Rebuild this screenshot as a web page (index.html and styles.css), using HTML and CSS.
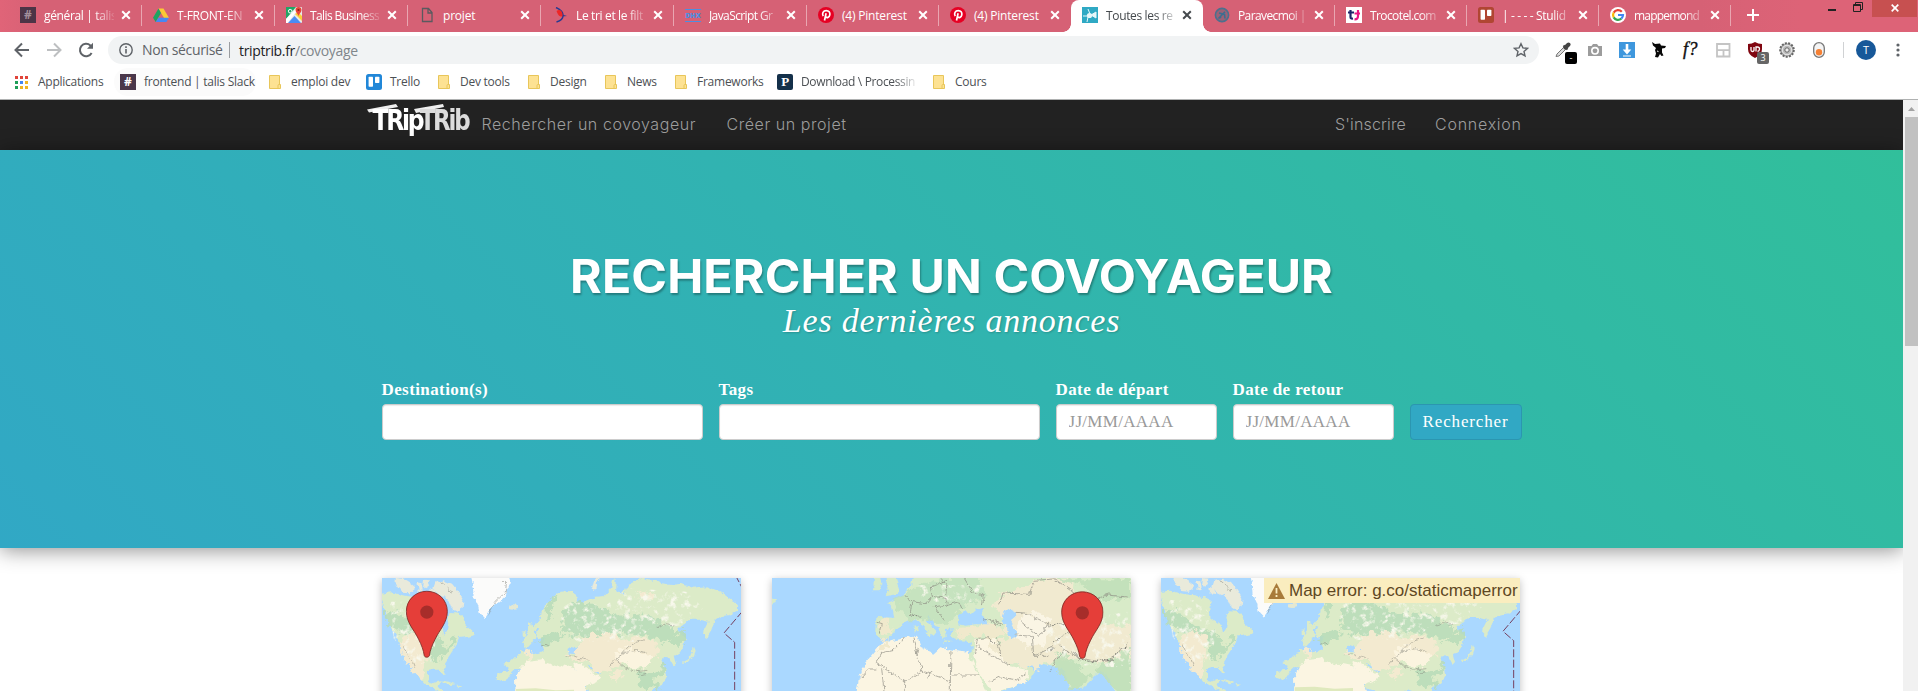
FILE: index.html
```html
<!DOCTYPE html>
<html lang="fr">
<head>
<meta charset="utf-8">
<title>Toutes les recherches</title>
<link rel="stylesheet" href="styles.css">
</head>
<body>
<svg class="defs" width="0" height="0">
  <defs>
    <symbol id="x" viewBox="0 0 10 10"><path d="M1.2 1.2l7.6 7.6M8.800 1.200l-7.600 7.600" stroke="currentColor" stroke-width="2" fill="none"/></symbol>
    <symbol id="folder" viewBox="0 0 16 16"><path d="M2.500 1.500h10v13h-10z" fill="#fde293" stroke="#e8c65a"/><path d="M11 14.500v-3q0-1 1-1h1.500v4z" fill="#fde293" stroke="#e8c65a"/></symbol>
    <symbol id="pin-logo" viewBox="0 0 16 16"><circle cx="8" cy="8" r="8" fill="#e60023"/><path d="M5.200 9.200C3.600 6.300 5.300 3.600 8.200 3.600c2.700 0 4 1.900 3.600 4.200-.4 2.600-3.100 3.600-4.200 1.700M8.100 6.300L6.500 13.500" stroke="#fff" stroke-width="1.700" fill="none"/></symbol>
    <symbol id="trello" viewBox="0 0 16 16"><rect width="16" height="16" rx="2.500" fill="currentColor"/><rect x="2.600" y="2.800" width="4.400" height="10" rx=".7" fill="#fff"/><rect x="9" y="2.800" width="4.400" height="6.200" rx=".7" fill="#fff"/></symbol>
    <filter id="coast" x="0" y="0" width="100%" height="100%"><feTurbulence type="fractalNoise" baseFrequency=".06" numOctaves="4" seed="4" result="n"/><feDisplacementMap in="SourceGraphic" in2="n" scale="16" xChannelSelector="R" yChannelSelector="G"/></filter>
    <filter id="rough" x="0" y="0" width="100%" height="100%"><feTurbulence type="fractalNoise" baseFrequency=".05" numOctaves="4" seed="9" result="n"/><feDisplacementMap in="SourceGraphic" in2="n" scale="42" xChannelSelector="R" yChannelSelector="G"/></filter>
    <filter id="speckle" x="0" y="0" width="100%" height="100%"><feTurbulence type="fractalNoise" baseFrequency=".05" numOctaves="5" seed="12"/><feColorMatrix values="0 0 0 0 .94  0 0 0 0 .94  0 0 0 0 .84  0 4 0 0 -2.100"/><feComposite in2="SourceGraphic" operator="in"/></filter>
    <symbol id="marker" viewBox="0 0 128 204"><path d="M64 2C29 2 2 29 2 63c0 34 24 56 37 84 9 18 15 33 17 49 1 7 15 7 16 0 2-16 8-31 17-49 13-28 37-50 37-84C126 29 99 2 64 2z" fill="#e53e39" stroke="#7c2a27" stroke-width="2.500"/><circle cx="64" cy="65" r="20" fill="#a72d2a"/></symbol>
    <g id="world">
      <rect x="0" y="90" width="1160" height="420" fill="#aad8ff"/>
      <g filter="url(#coast)">
        <g fill="#e9eadb">
          <path d="M78 129l22 2 22 14 16 14-18 16-26-2-12-14-6-10zM142 142l12 2 4 22-12 4zM162 134l14 2 4 16-12 8-8-8zM178 160l16 4 8 18-22-2zM196 142l24-6 26 10 16 20 18 30-2 22-18 12-14-8-8-20-14-14-20-10-14-18z"/>
          <path d="M665 162l8-30 10-8 6 4-10 20-4 16z"/>
        </g>
        <path d="M302 120l10 40 2 28 10 22 6 26 12 14 12-18 10-18 22-12 24-22-4-14 14-16-2-14 10-16z" fill="#fbfbfa"/>
        <ellipse cx="432" cy="216" rx="15" ry="8" fill="#e4e8d2"/>
        <g fill="#dcebc8">
          <path d="M30 176l34-4 40 10 32 4 30 6 22 12-6 20-2 22 20 18 18 12 4 26 10-8 4-24-4-18 10-18 24 2 14 12 6 20 20 18 8 14-26 6-22 4-10 24-14 22-20 30-2 14 8 18-8 2-12-16-18 0-16 4 0 24 12 14 16-8 12-2-8 18 4 6 20 10 4 16-14-6-22-14-26-14-20-20-8-24-22-26-16-18-10-30-14-24-24-40z"/>
          <path d="M216 436l20 4 20 8-14 2-24-10zM262 452l14 2-6 6z"/>
          <path d="M474 262l10 4 4 20 10 16-4 10-20 2 6-16-6-10zM458 290l12-2-2 16-10 2z"/>
          <path d="M512 250l4-26 26-30 30-24 26-2 28 16-8 14 12 6 36-14 32-4 26-28 6-28 10 10-2 32 22 4 12-26 46-22 34 10 20 6 32 6 30-4 34 12 40-4 44 16 24 18 28 20 0 18-26 14-24 4-20 12-10 32-14 22-8-4 2-22 12-24-26-6-28 0-26 12-14 20 10 8 16 14-4 26-18 22-14 8 6 22-8 8-12-22-16-4-6 16 12 22 4 22-14 22-18 8-14 4 0 14 12 20-6 12-18-18-8 14-14-6-16-22-20-8-26 18-18 18-4 24-14-20-10-28-12-6-34-6-10-4-18-8 24 30 10 6-2 14-50 24-12 4-20-34-14-34 2-16-22-4-22 4-8-8 8-12-20-8-8 8-12-4-10-18-6-6 14 24-2 8-8-12-18-20-18 0-14 14-10 16-18 8-14-4 2-24 30-2 4-12-16-12 20-6 18-18 16-4-2-14 10 4 8 12 42-8 10-6-6-22 14-14-24 6-6-18 8-20-16 10-4 30-16 18-10 2-6-18z"/>
          <path d="M968 336l6 14-6 16-12 12-18 6-2-4 22-12 8-18z"/>
        </g>
        <g fill="#aad8ff">
          <path d="M590 346l14-10 12 4 10-4 16 10 6 12-20 0-22-2-12 2zM654 334l10 4 0 14 6 18-8 6-6-16-4-14zM612 400l8 2 16 26 12 30-6 2-16-26zM658 388l14 12 22 14-6 4-20-10-14-16z"/>
        </g>
        <g fill="#fbf5e2">
          <path d="M437 480l-2-46 12-28 24-28 50-6 8 14 32 10 14-8 36 8 8 14 24 42 14 38z"/>
          <path d="M610 388l12-6 30 16 14 16 24 12-8 16-26 10-14 4-22-36z"/>
        </g>
      </g>
      <g filter="url(#rough)">
        <g fill="#b8dcb9" opacity=".85">
          <path d="M40 240l36-14 34 30 60 38 30 4 24 24-6 14 18-8 14-16 14-2-10 20-28 16-12 26-16 12-20-8 8-38-34-38-50-4-34-14z"/>
          <path d="M580 226l40-24 40 6 40 10 32 20 40 6 40-6 60 20 40 30 0 20-40 8-60-14-60-8-60 14-70 0-46-20z"/>
          <path d="M880 330l36-30 28-20 4 30-20 20-20-4zM800 420l24-14 40 6 20-30 8 14-12 30-28 8 14 26-6 8-16-14-18 14z"/>
          <path d="M500 320l24-18 40-12 20 6-16 18-20 10-30 8zM540 190l30-12-20 36-8 40-16-8z"/>
        </g>
        <g fill="#f3ead0">
          <path d="M92 318l30-26 44 12 6 50-10 56-4 20-24-20-22-30-18-26z"/>
          <path d="M622 322l40-20 66-10 50 24 26-12 60 18-4 36-26 28-46 12-30-18-22 12-26 18-40-6-10-18-40-24z"/>
          <path d="M466 352l26-4-4 18-18 8zM590 360l44-2 24 14-18 8-46-10zM720 420l20-14 20 4-4 18-16 12zM800 180l30-14 20 16-20 16z"/>
        </g>
        <path d="M736 352l34-14 42 10 36 14-6 26-34 16-38-12-28-18z" fill="#fbf4df"/>
      </g>
      <g filter="url(#speckle)"><path d="M60 200h100l40 90-10 90-50 10-70-80zM560 240l30-40 120 10 60-50 180 10 50 50-60 50-100 10-40 40-180 0z"/></g>
      <g filter="url(#coast)" fill="none" stroke="#7f8077" stroke-width="1.400">
        <path d="M722 392l18-22 24-18 40-6 30 10M738 376l26 22 34 12 34-4M750 362l22-24 26-16 26-8M100 334l10 24 16 20 8 20M395 134l14 14-4 26-22 20-16 18-14 30M584 364l26-2 20 8 22 6M510 334l18-6 14 8M860 276l24-8 30 6M800 404l14 18 14-4M212 140l14 12 10 14 16 6"/>
      </g>
      <path d="M437 462l60-2 60 6 55-2v20H437z" fill="#dfe9bd"/>
      <path d="M1096 120l20 38M1118 228l-56 66 32 28v170" fill="none" stroke="#75405f" stroke-width="3" stroke-dasharray="24 7"/>
    </g>
    <g id="eurasia">
      <rect x="0" y="90" width="1160" height="420" fill="#aad8ff"/>
      <g filter="url(#coast)">
        <g fill="#d8ebc8">
          <path d="M30 186l14 6 0 12-14 6zM340 122l20 0 4 26-8 18-20 0zM378 120l22 0 14 40-2 16-38 8 10-18-8-20zM456 120l-6 32-12 14-20 20-36 16 12 14 6 32-54-2-4 54 18 12 22-2 18-20 18-22 24-12 30 0 18 24 28 22 8-10-16-20-16-14 12-14 26 34 10 32 12-4-2-24 26-2-8 24 20 12 42 2 0 32-14 22 16 36 42 68 30 0 96-38 20-28-16-14-32-10-28-28 8-6 42 24 92 20 20 8 20 54h38l30-28 24-24 18 14 24 54h90V110z"/>
          <path d="M460 272l10-2 4 18-10 2zM490 294l22-4-2 14zM550 316l26 2-4 4-22-2zM616 316l18-6-4 10-12 2z"/>
        </g>
        <g fill="#fbf5e2">
          <path d="M286 480l8-50 18-46 50-60 106-22 12 34 40 20 18-16 84 10 22 50 38 80z"/>
          <path d="M644 312l56-6 24 54 20 32 58 14-4 34-100 36-46-66-16-48z"/>
        </g>
      </g>
      <g filter="url(#rough)">
        <path d="M700 210l26-34 40-12 60-32 100-6 20 60-40 60 20 40 70-20 120 10v90l-80 20-100-20-50 14-60 20-80-10-60-60 60-20z" fill="#f1ead0"/>
        <path d="M350 256l40 2 6 30-20 12-26-4zM588 276l60-6 50-8 34 24 6 14-50 10-98-6zM350 330l30-14 8 12-40 30z" fill="#f0e9cc"/>
        <path d="M780 240l60-8 30 40-20 60-60 0-30-40z" fill="#faf5e4"/>
        <path d="M400 200l60-40 80-30 110-4 30 60-70 30-60 60-50-20-60 0z" fill="#bfe0bb" opacity=".7"/>
        <path d="M870 130h240v60l-90 10-60-50zM1010 400l100-60v130h-50zM870 370l40-20 50 50 30 30-60 40-30-50z" fill="#bfdfb9" opacity=".85"/>
      </g>
      <g filter="url(#coast)" fill="#aad8ff"><path d="M592 268l4-30 20-10 16 10 14-14 20-6-8 20 20 14 4 16-40 0-28 4zM722 256l14-36 28 12 4 10-18 16 8 14 10 30-18 10-10-16-2-22z"/></g>
      <g filter="url(#speckle)"><path d="M470 150h210l-20 50h-180zM860 270l240-40 10 170-160-10-100-40z"/></g>
      <g filter="url(#coast)" fill="none" stroke="#8b8a80" stroke-width="2">
        <path d="M346 382l86 58-4 40M346 382l16-28 34-8 34-36M456 308l12 50 16 50-52 32M484 408l84 30 2-92M572 420h86M568 438v42M500 430l10-20M362 400l8 80M346 402l-24 0-28 30M472 334l-6 28M640 360l10-50 36-2 20 20M650 332l40 28 60 34M686 440l30-14 58 10 16-20M716 208l10-34 80 4 14-42 60-4 66 44 0 20M764 232l30 2 54 26 20 14M780 260l54 44 30-40M764 300l50 4 4 60 60-30M706 310l16 50M818 364l40 0 20-26M870 408l10-26 30-40M430 180l22 20 44 6 18-22-6-28 50-20M452 200l-4 40M514 184l40 6 6 20-42 6M520 216l30 40M560 210l34-10 10 24M610 130l24 40 36 12-6 30M540 130l20 24-4 36M980 200l60-20 60 6M350 262l14 4-6 30M670 250l56 18M930 350l30 20 50 10 50-4"/>
        <path stroke="#85857c" stroke-width="3" stroke-dasharray="5 2" d="M866 270l40-4 20 20-30 24-20 14M894 330l40 30 50 20 60-4 56-50M450 240l34 4M690 260l30 16"/>
      </g>
    </g>
  </defs>
</svg>

<header class="browser">
  <div class="tabs">
    <div class="tab"><span class="ico slack dim">#</span><span class="title">général | talis</span><svg class="close"><use href="#x"/></svg></div>
    <div class="tab"><svg class="ico" viewBox="0 0 16 16"><path d="M5.500 1.500h5L16 11h-5z" fill="#fbc935"/><path d="M5.500 1.500L8 6 2.700 15 0 10.700z" fill="#1da462"/><path d="M5.400 10.700H16L13.400 15H2.800z" fill="#4688f4"/></svg><span class="title">T-FRONT-EN</span><svg class="close"><use href="#x"/></svg></div>
    <div class="tab"><svg class="ico" viewBox="0 0 16 16"><rect width="16" height="16" rx="1" fill="#e8e8e8"/><path d="M0 0h10L0 12z" fill="#22a565"/><path d="M2 16l6.500-7 6.500 7z" fill="#4a8cf5"/><path d="M0 16V12L10 2v3L1.500 16z" fill="#fff"/><path d="M9 7l7 7V9l-4-4z" fill="#fbcf3b"/><path d="M12.500 0a3 3 0 0 1 3 3c0 2.500-2.500 3.600-3 6-.500-2.400-3-3.500-3-6a3 3 0 0 1 3-3z" fill="#e9453a"/><circle cx="12.500" cy="3" r="1.100" fill="#8b2117"/><circle cx="4.200" cy="4.200" r="1.800" fill="none" stroke="#fff"/></svg><span class="title tight">Talis Business</span><svg class="close"><use href="#x"/></svg></div>
    <div class="tab"><svg class="ico" viewBox="0 0 16 16"><path d="M3.500 1.500h6l3.500 4v9H3.500zM9 1.500V6h4" fill="none" stroke="#5a5a5f" stroke-width="1.300"/></svg><span class="title plain">projet</span><svg class="close"><use href="#x"/></svg></div>
    <div class="tab"><svg class="ico" viewBox="0 0 16 16"><path d="M4 .5c4.500 2 7 4.500 7 8s-3 5.500-6.500 6.500" fill="none" stroke="#273a91" stroke-width="1.500"/><path d="M10 7.500l5 1.500-5 .5z" fill="#273a91"/><path d="M4.500 4C9 1 11 6 10.500 9.500 8 10 6.500 9 4.500 4z" fill="#ee2626"/></svg><span class="title">Le tri et le filt</span><svg class="close"><use href="#x"/></svg></div>
    <div class="tab"><span class="ico dhx">DHX</span><span class="title tight">JavaScript Gr</span><svg class="close"><use href="#x"/></svg></div>
    <div class="tab short"><svg class="ico"><use href="#pin-logo"/></svg><span class="title plain">(4) Pinterest</span><svg class="close"><use href="#x"/></svg></div>
    <div class="tab short before-active"><svg class="ico"><use href="#pin-logo"/></svg><span class="title plain">(4) Pinterest</span><svg class="close"><use href="#x"/></svg></div>
    <div class="tab short active"><svg class="ico" viewBox="0 0 16 16"><rect width="16" height="16" fill="#2fa9c4"/><path d="M1 9h4M6 2l2 5M9 8l5-3v6zM6 10l-1 5" stroke="#e6f7fa" fill="#e6f7fa"/><circle cx="7.500" cy="8.500" r="2.600" fill="#e6f7fa"/></svg><span class="title">Toutes les re</span><svg class="close"><use href="#x"/></svg></div>
    <div class="tab short"><svg class="ico" viewBox="0 0 16 16"><circle cx="8" cy="8" r="6.600" fill="#9a6276" stroke="#4c708d" stroke-width="1.600"/><path d="M4.500 11.500L11 4.800M5 6l5.500 1.500L11 11.500M5.500 9.500l1.500 1.500" stroke="#3c6e90" stroke-width="1.600" fill="none"/></svg><span class="title tight">Paravecmoi |</span><svg class="close"><use href="#x"/></svg></div>
    <div class="tab short"><svg class="ico" viewBox="0 0 16 16"><rect width="16" height="16" fill="#fff"/><path d="M4.500 3v7q0 2 2.500 1.500M2 5.500h6" stroke="#1d2469" stroke-width="2.200" fill="none"/><path d="M12 3v6q0 3.500-3.500 3.300M8.500 6.500H14" stroke="#ea1583" stroke-width="2.200" fill="none"/></svg><span class="title tight">Trocotel.com</span><svg class="close"><use href="#x"/></svg></div>
    <div class="tab short"><svg class="ico brick"><use href="#trello"/></svg><span class="title">| - - - - Stulid</span><svg class="close"><use href="#x"/></svg></div>
    <div class="tab short"><svg class="ico" viewBox="0 0 16 16"><circle cx="8" cy="8" r="8" fill="#fff"/><g fill="none" stroke-width="2.200"><path d="M11.800 4.800A5 5 0 0 0 3.700 5.600" stroke="#ea4335"/><path d="M3.700 5.600a5 5 0 0 0 0 4.800" stroke="#fbbc05"/><path d="M3.700 10.400A5 5 0 0 0 11.300 11.700" stroke="#34a853"/><path d="M11.300 11.700A5 5 0 0 0 13 8H8" stroke="#4285f4"/></g></svg><span class="title tighter">mappemond</span><svg class="close"><use href="#x"/></svg></div>
    <svg class="new-tab" viewBox="0 0 12 12"><path d="M6 0v12M0 6h12" stroke="#fff" stroke-width="2"/></svg>
    <div class="window-buttons">
      <svg class="minimise" viewBox="0 0 8 2"><path d="M0 0h8v2H0z" fill="#222"/></svg>
      <svg class="restore" viewBox="0 0 10 10"><path d="M.5 2.500h7v7h-7zM.5 3.500h7M2.500 2V.5h7v7H8" fill="none" stroke="#222"/></svg>
      <span class="quit"><svg viewBox="0 0 8 8"><path d="M.7.7l6.600 6.600M7.300.7L.7 7.300" stroke="#fff" stroke-width="1.700"/></svg></span>
    </div>
  </div>

  <div class="toolbar">
    <div class="history">
      <svg viewBox="0 0 16 16"><path d="M15 8H2M8 1.500L1.500 8 8 14.500" fill="none" stroke="#5f6368" stroke-width="2"/></svg>
      <svg viewBox="0 0 16 16"><path d="M1 8h13M8 1.500L14.500 8 8 14.500" fill="none" stroke="#bdbfc1" stroke-width="2"/></svg>
      <svg viewBox="0 0 16 16"><path d="M13.600 11A6.200 6.200 0 1 1 12.400 3.500L14 5" fill="none" stroke="#5f6368" stroke-width="2"/><path d="M15 .8v6H9z" fill="#5f6368"/></svg>
    </div>
    <div class="omnibox">
      <svg class="info" viewBox="0 0 14 14"><circle cx="7" cy="7" r="6.200" fill="none" stroke="#5f6368" stroke-width="1.400"/><path d="M7 6v4.500M7 3.300v1.600" stroke="#5f6368" stroke-width="1.600"/></svg>
      <span class="insecure">Non sécurisé</span>
      <span class="url"><b>triptrib.fr</b>/covoyage</span>
      <svg class="star" viewBox="0 0 16 16"><path d="M8 1.700l1.900 4.200 4.500.5-3.400 3 1 4.500L8 11.600l-4 2.300 1-4.500-3.400-3 4.500-.5z" fill="none" stroke="#5f6368" stroke-width="1.400"/></svg>
    </div>
    <div class="extensions">
      <div class="ext"><svg viewBox="0 0 16 16"><path d="M1 14.500l1-2.500 7-7 2 2-7 7z" fill="#ddd" stroke="#777"/><path d="M8.500 3.500l4 4" stroke="#444" stroke-width="2"/><path d="M10.500 5.500l3-3" stroke="#444" stroke-width="4" stroke-linecap="round"/></svg><span class="badge black">-</span></div>
      <div class="ext"><svg viewBox="0 0 16 16"><path d="M1 4h3.500L6 2h4l1.500 2H15v10H1z" fill="#9c9c9c"/><circle cx="8" cy="8.800" r="3.200" fill="#9c9c9c" stroke="#fff" stroke-width="1.600"/></svg></div>
      <div class="ext"><svg viewBox="0 0 16 16"><path d="M0 0h16v16H0z" fill="#3e97dd"/><path d="M6.700 2h2.600v5.500h3L8 12.500 3.700 7.500h3zM4 13.500h8v1H4z" fill="#fff"/></svg></div>
      <div class="ext"><svg viewBox="0 0 16 16"><path d="M1 0l3 2 5-.5 1 2 5 .5-1 2-3 .5 0 4 1.500 3-2 .5-1.500-2-2 3.500-3-.5 1-3.500L4 8l1-2-3-2.500z" fill="#080808"/><path d="M6 9l1.500.6" stroke="#fff"/></svg></div>
      <div class="ext glyph">f?</div>
      <div class="ext"><svg viewBox="0 0 16 16"><path d="M2 2h12.500v12.500H2zM2 8.200h12.500M8.500 8.200v6" fill="none" stroke="#c4c4c4" stroke-width="1.800"/></svg></div>
      <div class="ext"><svg viewBox="0 0 16 16"><path d="M8 0q3 2 7 2v5q0 6-7 9Q1 13 1 7V2q4 0 7-2z" fill="#800610"/><path d="M4 5v3q0 1.500 1.500 1.500T7 8V5M9 9.500V5h1.500q2 0 2 2T10.500 9.500" fill="none" stroke="#fff" stroke-width="1.300"/></svg><span class="badge">3</span></div>
      <div class="ext"><svg viewBox="0 0 16 16"><circle cx="8" cy="8" r="6.800" fill="#aaa" stroke="#666" stroke-width="2" stroke-dasharray="2 1.300"/><circle cx="8" cy="8" r="4.800" fill="#bbb" stroke="#eee"/><circle cx="8" cy="8" r="2.200" fill="#eee" stroke="#666"/></svg></div>
      <div class="ext"><svg viewBox="0 0 16 16"><rect x="2.700" y=".7" width="10.600" height="14.600" rx="5.300" fill="#f4f4f4" stroke="#777" stroke-width="1.300"/><circle cx="8" cy="10.300" r="3.200" fill="#f58034"/></svg></div>
    </div>
    <div class="profile"><span class="avatar">T</span></div>
    <svg class="menu" viewBox="0 0 4 14"><circle cx="2" cy="2" r="1.600"/><circle cx="2" cy="7" r="1.600"/><circle cx="2" cy="12" r="1.600"/></svg>
  </div>

  <nav class="bookmarks">
    <span class="mark"><svg class="ico" viewBox="0 0 16 16"><path d="M1 2h3v3H1zM6 2h3v3H6zM11 2h3v3h-3z" fill="#e0443a"/><path d="M1 7h3v3H1z" fill="#1e9e57"/><path d="M6 7h3v3H6z" fill="#4285f4"/><path d="M11 7h3v3h-3zM6 12h3v3H6zM11 12h3v3h-3z" fill="#f0b422"/><path d="M1 12h3v3H1z" fill="#1e9e57"/></svg>Applications</span>
    <span class="mark hover"><span class="ico slack">#</span>frontend | talis Slack</span>
    <span class="mark"><svg class="ico"><use href="#folder"/></svg>emploi dev</span>
    <span class="mark"><svg class="ico blue"><use href="#trello"/></svg>Trello</span>
    <span class="mark"><svg class="ico"><use href="#folder"/></svg>Dev tools</span>
    <span class="mark"><svg class="ico"><use href="#folder"/></svg>Design</span>
    <span class="mark"><svg class="ico"><use href="#folder"/></svg>News</span>
    <span class="mark"><svg class="ico"><use href="#folder"/></svg>Frameworks</span>
    <span class="mark"><span class="ico processing">P</span><span class="cut">Download \ Processin</span></span>
    <span class="mark"><svg class="ico"><use href="#folder"/></svg>Cours</span>
  </nav>
</header>

<div class="viewport">
  <main class="page">
    <nav class="navbar">
      <div class="container">
        <div class="brand">
          <svg class="swash" viewBox="0 0 100 40"><path d="M0 5.500L29 0l2 3L2 8.500zM47 5L76 0l1 3-28 6z"/></svg>
          <span class="brand-a">TRip</span><span class="brand-b">TRib</span>
        </div>
        <a class="link search">Rechercher un covoyageur</a>
        <a class="link create">Créer un projet</a>
        <a class="link join">S'inscrire</a>
        <a class="link login">Connexion</a>
      </div>
    </nav>

    <section class="hero">
      <h1>RECHERCHER UN COVOYAGEUR</h1>
      <p class="lead">Les dernières annonces</p>
      <form class="search-form">
        <label><span>Destination(s)</span><input type="text"></label>
        <label><span>Tags</span><input type="text"></label>
        <label><span>Date de départ</span><input type="text" placeholder="JJ/MM/AAAA"></label>
        <label><span>Date de retour</span><input type="text" placeholder="JJ/MM/AAAA"></label>
        <button type="button">Rechercher</button>
      </form>
    </section>

    <section class="results">
      <article class="card"><svg viewBox="36 129 1077 339" preserveAspectRatio="none"><use href="#world"/><use href="#marker" x="107" y="166" width="127" height="204"/></svg></article>
      <article class="card"><svg viewBox="33 129 1077 339" preserveAspectRatio="none"><use href="#eurasia"/><use href="#marker" x="900" y="168" width="128" height="205"/></svg></article>
      <article class="card"><svg viewBox="36 134 1077 339" preserveAspectRatio="none"><use href="#world"/></svg>
        <div class="map-error"><svg viewBox="0 0 17 16"><path d="M8.500 0L17 16H0z" fill="#a87b3a"/><path d="M8.500 5v5.500M8.500 12v2" stroke="#faedbf" stroke-width="1.800"/></svg><span>Map error: g.co/staticmaperror</span></div>
      </article>
    </section>
  </main>
  <div class="scrollbar"><svg viewBox="0 0 7 4"><path d="M3.500 0L7 4H0z" fill="#a3a3a3"/></svg><div class="thumb"></div></div>
</div>
</body>
</html>
```

FILE: styles.css
```css
* { box-sizing: border-box; }
body { margin: 0; width: 1918px; height: 691px; overflow: hidden; background: #fff; font-family: "Open Sans", "Noto Sans", sans-serif; }
svg { display: block; flex: none; }
.defs { position: absolute; }

.browser { height: 100px; border-bottom: 1px solid #afb1b1; font-size: 12px; letter-spacing: -.2px; }
.ico { flex: none; width: 16px; height: 16px; margin-right: 8px; }

.tabs { display: flex; height: 32px; padding-left: 9px; background: linear-gradient(90deg, #e06478 0, #d66175 40px, #d66175 1700px, #dd6377 1800px); color: #fff; }
.tab { position: relative; display: flex; align-items: center; width: 133px; padding: 0 0 2px 11px; }
.tab.short { width: 132px; }
.tab::after { content: ""; position: absolute; right: 0; top: 5px; width: 1px; height: 21px; background: #e9a6b1; }
.tab.before-active::after { display: none; }
.title { width: 70px; white-space: nowrap; letter-spacing: -.35px; -webkit-mask-image: linear-gradient(90deg, #000 50px, rgba(0, 0, 0, .15) 70px); mask-image: linear-gradient(90deg, #000 50px, rgba(0, 0, 0, .15) 70px); }
.title.tight { letter-spacing: -.6px; }
.title.tighter { letter-spacing: -.8px; }
.title.plain { letter-spacing: -.2px; -webkit-mask-image: none; mask-image: none; }
.close { width: 10px; height: 10px; margin-left: 7px; }
.short .close { margin-left: 6px; }
.active { background: #fff; color: #45494d; border-radius: 8px 8px 0 0; }
.active::before, .active::after { content: ""; position: absolute; top: auto; bottom: 0; width: 8px; height: 8px; background: radial-gradient(circle at 0 0, transparent 7.5px, #fff 8px); }
.tab.active::before { left: -8px; }
.tab.active::after { top: auto; right: -8px; width: 8px; height: 8px; background: radial-gradient(circle at 100% 0, transparent 7.5px, #fff 8px); }
.slack { display: grid; place-items: center; background: #4a374a; color: #fff; font-size: 12px; font-weight: 700; letter-spacing: 0; line-height: 16px; }
.slack.dim { background: #4c3446; color: #a38f9c; }
.dhx { display: grid; place-items: center; height: 13px; border-top: 1px solid #4d8fe0; border-bottom: 1px solid #4d8fe0; color: #4d8fe0; font-size: 7px; font-weight: 800; letter-spacing: 0; line-height: 11px; }
.brick { color: #b04632; }
.blue { color: #2187d8; }
.new-tab { width: 12px; height: 12px; margin: 9px 0 0 16px; }
.window-buttons { display: flex; flex: 1; justify-content: flex-end; }
.minimise { width: 8px; height: 2px; margin: 9px 17px 0 0; }
.restore { width: 10px; height: 10px; margin: 2px 9px 0 0; }
.quit { display: grid; place-items: center; width: 45px; height: 17px; margin-right: 1px; background: #c75050; }
.quit svg { width: 8px; height: 8px; margin-top: -1px; }

.toolbar { display: flex; align-items: center; height: 32px; padding-top: 4px; }
.history { display: flex; gap: 16px; width: 108px; padding-left: 14px; }
.history svg { width: 16px; height: 16px; }
.omnibox { display: flex; align-items: center; width: 1431px; height: 28px; padding: 0 10px 0 11px; border-radius: 14px; background: #f1f3f4; color: #5f6368; font-size: 14px; letter-spacing: -.35px; }
.info { width: 14px; height: 14px; margin-right: 9px; }
.insecure { width: 88px; height: 16px; line-height: 16px; border-right: 1px solid #9a9da0; white-space: nowrap; }
.url { flex: 1; padding-left: 9px; color: #80868b; }
.url b { color: #202124; font-weight: 400; }
.star { width: 16px; height: 16px; }
.extensions { display: flex; gap: 16px; margin-left: 16px; }
.ext { position: relative; width: 16px; height: 16px; }
.ext > svg { width: 16px; height: 16px; }
.glyph { color: #111; font: italic 400 18px/14px "Liberation Serif", serif; letter-spacing: .5px; -webkit-text-stroke: .4px #111; }
.badge { position: absolute; left: 10px; top: 10px; width: 12px; height: 12px; border-radius: 2px; background: #666; color: #fff; font-size: 9px; line-height: 12px; text-align: center; letter-spacing: 0; }
.badge.black { background: #000; }
.profile { display: flex; align-items: center; width: 34px; height: 16px; margin-left: 16px; padding-left: 12px; border-left: 1px solid #d0d2d4; }
.avatar { flex: none; width: 20px; height: 20px; border-radius: 50%; background: #175899; color: #fff; font-size: 11px; line-height: 20px; text-align: center; }
.menu { width: 4px; height: 14px; margin-left: 19px; fill: #5f6368; }

.bookmarks { display: grid; grid-template-columns: 106px 147px 99px 70px 90px 77px 70px 104px 154px 80px; align-items: center; height: 35px; padding-left: 14px; color: #4c5054; }
.mark { display: flex; align-items: center; height: 28px; white-space: nowrap; letter-spacing: -.25px; }
.mark.hover { margin: 0 11px 0 -6px; padding-left: 6px; border-radius: 14px; background: #fbfbfb; }
.processing { display: grid; place-items: center; border-radius: 2px; background: #14304a; color: #fff; font: 700 13px/16px "Liberation Serif", serif; }
.cut { width: 114px; letter-spacing: -.35px; -webkit-mask-image: linear-gradient(90deg, #000 94px, rgba(0, 0, 0, .15) 114px); mask-image: linear-gradient(90deg, #000 94px, rgba(0, 0, 0, .15) 114px); }

.viewport { display: flex; height: 591px; }
.page { width: 1903px; overflow: hidden; }
.scrollbar { display: flex; flex-direction: column; align-items: center; width: 15px; padding: 7px 0 0 2px; background: #f1f1f1; }
.scrollbar svg { width: 7px; height: 4px; }
.thumb { width: 13px; height: 229px; margin-top: 6px; background: #c1c1c1; }

.navbar { height: 50px; background: #222; }
.container { display: flex; align-items: center; width: 1170px; height: 48px; margin: 0 auto; color: #9d9d9d; font: 400 16px/20px Inter, sans-serif; }
.brand { position: relative; display: flex; width: 101px; height: 42px; color: #fff; font: 700 29px/34px "DejaVu Sans Condensed", "DejaVu Sans", sans-serif; font-stretch: condensed; letter-spacing: -2.5px; }
.brand span { width: 50px; white-space: nowrap; transform: scaleX(.9); transform-origin: 0 0; flex: none; padding-left: 6px; }
.brand .brand-b { padding-left: 3px; color: #dcdcdc; transform: scaleX(.88); }
.swash { position: absolute; left: 0; top: 1px; width: 100px; height: 40px; fill: #eee; }
.link { font-weight: 300; white-space: nowrap; letter-spacing: .56px; }
.search { width: 245px; margin-left: 14px; }
.create { flex: 1; }
.join { width: 100px; letter-spacing: .15px; }
.login { width: 101.5px; letter-spacing: .75px; }

.hero { position: relative; height: 398px; padding-top: 100px; background: linear-gradient(45deg, #31a8c5, #31bf9b); box-shadow: 0 2px 20px rgba(0, 0, 0, .45); color: #fff; text-align: center; }
h1 { margin: 0; font: 700 46px/53px Inter, sans-serif; letter-spacing: .1px; text-shadow: 1px 2px 2px rgba(0, 0, 0, .3); white-space: nowrap; transform: scaleX(1.05); }
.lead { margin: 0; font: italic 400 34px/35px "Liberation Serif", serif; letter-spacing: .8px; text-shadow: 1px 1px 2px rgba(0, 0, 0, .2); }
.search-form { display: grid; grid-template-columns: 321px 321px 161px 161px 112px; gap: 16px; align-items: end; width: 1140px; margin: 40px auto 0; text-align: left; font: 400 17px/24px "Liberation Serif", serif; }
.search-form label { font-weight: 700; }
.search-form label span { display: block; height: 24px; margin-bottom: 2px; letter-spacing: .4px; }
.search-form input { display: block; width: 100%; height: 36px; padding: 0 12px; border: 1px solid #ccc; border-radius: 4px; background: #fff; box-shadow: inset 0 1px 1px rgba(0, 0, 0, .08); font: 400 17px "Liberation Serif", serif; letter-spacing: .3px; }
.search-form input::placeholder { color: #999; opacity: 1; }
.search-form button { height: 36px; padding: 0 0 1px; border: 1px solid #2b96b0; border-radius: 4px; background: #31a8c4; color: #fff; font: 400 17px "Liberation Serif", serif; letter-spacing: .85px; }

.results { display: grid; grid-template-columns: repeat(3, 359px); gap: 30.5px; width: 1138px; margin: 30px 0 0 382px; }
.card { position: relative; height: 130px; box-shadow: 0 2px 8px rgba(0, 0, 0, .25); }
.card > svg { width: 359px; height: 113px; }
.map-error { position: absolute; right: 0; top: 0; display: flex; align-items: center; width: 256px; height: 25px; padding-left: 4px; background: #faedbf; color: #5e4723; font: 400 17px/25px "Liberation Sans", sans-serif; white-space: nowrap; }
.map-error svg { width: 17px; height: 16px; margin-right: 4px; }
```
